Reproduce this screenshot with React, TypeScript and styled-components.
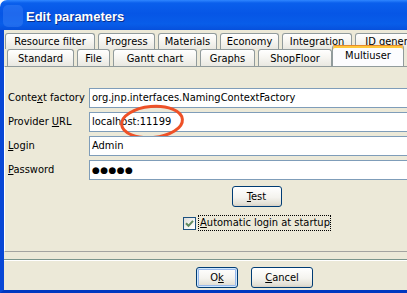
import React from "react";
import styled, { createGlobalStyle } from "styled-components";

const GlobalStyle = createGlobalStyle`
  html, body {
    margin: 0;
    padding: 0;
    overflow: hidden;
    background: #ffffff;
  }
`;

const uiFont = `"DejaVu Sans Condensed", Tahoma, "Liberation Sans", sans-serif`;

const Window = styled.div`
  width: 509px;
  height: 293px;
  display: flex;
  flex-direction: column;
  font-family: ${uiFont};
  font-size: 11px;
  color: #000;
`;

const TitleBar = styled.div`
  height: 30px;
  flex: none;
  display: flex;
  align-items: center;
  padding: 2px 0 0 3px;
  box-sizing: border-box;
  border-radius: 7px 7px 0 0;
  background: linear-gradient(
    180deg,
    #2f86ff 0%,
    #0a5fec 10%,
    #0656e6 45%,
    #085de9 80%,
    #0650dc 100%
  );
`;

const IconGhost = styled.div`
  width: 20px;
  height: 22px;
  margin-right: 3px;
  border-radius: 5px;
  background: rgba(90, 150, 255, 0.3);
`;

const Title = styled.span`
  font-family: "Liberation Sans", Arial, sans-serif;
  font-weight: bold;
  font-size: 13px;
  color: #fff;
  text-shadow: 1px 1px 0 #0a2e8c;
`;

const Frame = styled.div`
  flex: 1;
  display: flex;
  flex-direction: column;
  background: #ece9d8;
  border-left: 4px solid #0847d6;
  border-right: 4px solid #0847d6;
  border-bottom: 3px solid #0038c0;
  padding-top: 3px;
  min-height: 0;
`;

const TabRow = styled.div<{ $h: number; $pl: number }>`
  height: ${(p) => p.$h}px;
  display: flex;
  align-items: flex-end;
  gap: 3px;
  padding-left: ${(p) => p.$pl}px;
  flex: none;
`;

const Tab = styled.div<{ $w: number; $h: number }>`
  width: ${(p) => p.$w}px;
  height: ${(p) => p.$h}px;
  flex: none;
  box-sizing: border-box;
  border: 1px solid #919b9c;
  border-bottom: none;
  border-radius: 3px 3px 0 0;
  background: linear-gradient(180deg, #ffffff 0%, #f7f6f2 45%, #e9e8e1 100%);
  display: flex;
  align-items: center;
  justify-content: center;
  white-space: nowrap;
`;

const ActiveTab = styled(Tab)`
  margin-left: -3px;
  background: #fcfcfe;
  border-top: 1px solid #e68b2c;
  box-shadow: inset 0 2px 0 #ffc73c;
  padding-top: 1px;
  padding-bottom: 3px;
  position: relative;
  z-index: 1;
`;

const Panel = styled.div`
  flex: 1;
  background: #ece9d8;
  border-top: 1px solid #919b9c;
  border-left: 1px solid #ffffff;
  border-bottom: 1px solid #a3a3a0;
  padding: 21px 0 0 3px;
  display: flex;
  flex-direction: column;
  align-items: center;
`;

const Form = styled.div`
  align-self: stretch;
  display: grid;
  grid-template-columns: 81px 1fr;
  grid-auto-rows: 20px;
  row-gap: 4px;
`;

const Label = styled.label`
  display: block;
  line-height: 20px;
  white-space: nowrap;
`;

const Field = styled.div`
  position: relative;
  box-sizing: border-box;
  height: 20px;
  border: 1px solid #7f9db9;
  background: #fff;
  padding-left: 2px;
  line-height: 18px;
  white-space: nowrap;
`;

const Dots = styled.span`
  font-size: 9px;
  letter-spacing: 0.4px;
  font-family: "DejaVu Sans", sans-serif;
`;

const Annotation = styled.svg`
  position: absolute;
  left: 28px;
  top: -10px;
  overflow: visible;
  pointer-events: none;
`;

const Button = styled.button<{ $w: number; $default?: boolean }>`
  width: ${(p) => p.$w}px;
  height: 21px;
  box-sizing: border-box;
  padding: 0;
  font-family: ${uiFont};
  font-size: 11px;
  color: #000;
  border: 1px solid #003c74;
  border-radius: 3px;
  background: linear-gradient(180deg, #ffffff 0%, #f4f3ee 55%, #e3e0d6 88%, #d6d0c5 100%);
  box-shadow: ${(p) =>
    p.$default ? "inset 0 0 0 1px #cee7ff, inset 0 0 0 2px #98b8ea" : "none"};
`;

const TestButton = styled(Button)`
  margin-top: 6px;
`;

const CheckRow = styled.div`
  margin-top: 9px;
  display: flex;
  align-items: center;
  gap: 3px;
`;

const CheckBox = styled.div`
  width: 13px;
  height: 13px;
  box-sizing: border-box;
  border: 1px solid #1c5180;
  background: linear-gradient(135deg, #dcdcd7 0%, #f5f5f3 60%, #ffffff 100%);
  display: flex;
  align-items: center;
  justify-content: center;
`;

const CheckLabel = styled.span`
  outline: 1px dotted #000;
  outline-offset: 0;
  padding: 1px 0 1px 1px;
  line-height: 12px;
  white-space: nowrap;
`;

const Separator = styled.div`
  margin-top: 7px;
  height: 0;
  border-top: 1px solid #7b958c;
  border-bottom: 1px solid #ffffff;
  flex: none;
`;

const ButtonBar = styled.div`
  flex: none;
  display: flex;
  justify-content: center;
  gap: 13px;
  padding: 6px 0 2px 0;
`;

const tabsBack = [
  { t: "Resource filter", w: 90 },
  { t: "Progress", w: 57 },
  { t: "Materials", w: 59 },
  { t: "Economy", w: 59 },
  { t: "Integration", w: 70 },
  { t: "ID generation", w: 88 },
];

const tabsFront = [
  { t: "Standard", w: 67 },
  { t: "File", w: 33 },
  { t: "Gantt chart", w: 84 },
  { t: "Graphs", w: 55 },
  { t: "ShopFloor", w: 74 },
];

export default function App() {
  return (
    <Window>
      <GlobalStyle />
      <TitleBar>
        <IconGhost />
        <Title>Edit parameters</Title>
      </TitleBar>
      <Frame>
        <TabRow $h={16} $pl={1}>
          {tabsBack.map((tab) => (
            <Tab key={tab.t} $w={tab.w} $h={16}>
              {tab.t}
            </Tab>
          ))}
        </TabRow>
        <TabRow $h={17} $pl={3}>
          {tabsFront.map((tab) => (
            <Tab key={tab.t} $w={tab.w} $h={17}>
              {tab.t}
            </Tab>
          ))}
          <ActiveTab $w={72} $h={21}>
            Multiuser
          </ActiveTab>
        </TabRow>
        <Panel>
          <Form>
            <Label>
              Conte<u>x</u>t factory
            </Label>
            <Field>org.jnp.interfaces.NamingContextFactory</Field>
            <Label>
              Provider <u>U</u>RL
            </Label>
            <Field>
              localhost:11199
              <Annotation width="68" height="38" viewBox="0 0 68 38">
                <ellipse
                  cx="34"
                  cy="19"
                  rx="30.5"
                  ry="15.5"
                  fill="none"
                  stroke="#ee5127"
                  strokeWidth="3"
                  transform="rotate(-5 34 19)"
                />
              </Annotation>
            </Field>
            <Label>
              <u>L</u>ogin
            </Label>
            <Field>Admin</Field>
            <Label>
              <u>P</u>assword
            </Label>
            <Field>
              <Dots>●●●●●</Dots>
            </Field>
          </Form>
          <TestButton $w={50}>
            <u>T</u>est
          </TestButton>
          <CheckRow>
            <CheckBox>
              <svg width="9" height="9" viewBox="0 0 9 9">
                <path
                  d="M1 4.2 L3.5 6.8 L8 1.8"
                  fill="none"
                  stroke="#5f8a5f"
                  strokeWidth="2"
                />
              </svg>
            </CheckBox>
            <CheckLabel>
              <u>A</u>utomatic login at startup
            </CheckLabel>
          </CheckRow>
        </Panel>
        <Separator />
        <ButtonBar>
          <Button $w={42} $default>
            O<u>k</u>
          </Button>
          <Button $w={62}>
            <u>C</u>ancel
          </Button>
        </ButtonBar>
      </Frame>
    </Window>
  );
}
